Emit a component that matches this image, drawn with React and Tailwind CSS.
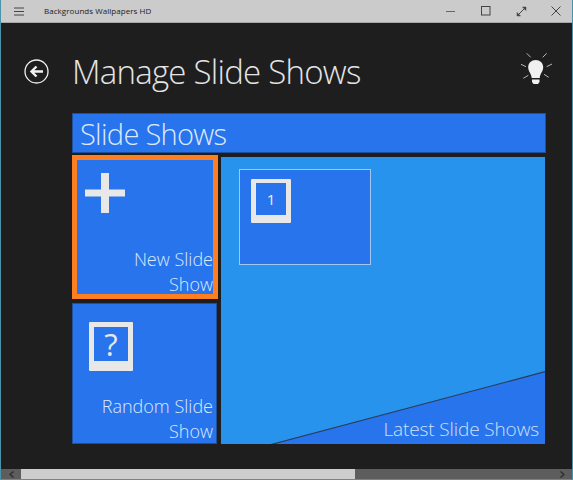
import React from "react";

export default function App() {
  return (
    <div className="w-[573px] h-[480px] flex flex-col overflow-hidden bg-[#1e1e1e] border-l border-r border-[#4b93a8] font-['Open_Sans','Noto_Sans',sans-serif]">
      <div className="h-[23px] shrink-0 bg-[#cbcbcb] border-b border-[#a8a8a8] flex items-center">
        <svg className="ml-[13px] w-[10px] h-[9px]" viewBox="0 0 10 9" stroke="#444" strokeWidth="1" fill="none"><path d="M0 1h10M0 4.500h10M0 8h10" /></svg>
        <span className="ml-[20px] text-[8px] leading-none tracking-[0.05px] text-[#222]">Backgrounds Wallpapers HD</span>
        <div className="ml-auto flex items-center">
          <svg className="w-[10px] h-[10px] mr-[25px]" viewBox="0 0 10 10" stroke="#666" fill="none"><path d="M0 5.500h9" /></svg>
          <svg className="w-[10px] h-[10px] mr-[25px]" viewBox="0 0 10 10" stroke="#444" fill="none"><rect x=".5" y=".5" width="8.500" height="8.500" /></svg>
          <svg className="w-[11px] h-[11px] mr-[24px]" viewBox="0 0 11 11" stroke="#444" fill="#444"><path d="M1.500 9.500l8-8" /><path d="M6.500 1h3.500v3.500zM1 6.500v3.500h3.500z" strokeWidth=".5" /></svg>
          <svg className="w-[10px] h-[10px] mr-[11px]" viewBox="0 0 10 10" stroke="#444" fill="none"><path d="M.5 .5l9 9M9.500 .5l-9 9" /></svg>
        </div>
      </div>

      <div className="flex-1 min-h-0 flex flex-col pl-[71px]">
        <div className="relative h-[90px] shrink-0">
          <svg className="absolute left-[-48px] top-[36px] w-[25px] h-[25px]" viewBox="0 0 25 25" fill="none" stroke="#f2f2f2">
            <circle cx="12.500" cy="12.500" r="11.500" strokeWidth="1.300" />
            <path d="M19 12.500H8M12.500 7.500l-5 5 5 5" strokeWidth="2.400" />
          </svg>
          <h1 className="absolute left-0 top-[26px] text-[33px] leading-[45px] tracking-[-0.75px] font-light text-[#e4e4e4] whitespace-nowrap">Manage Slide Shows</h1>
          <svg className="absolute left-[448px] top-[30px] w-[33px] h-[33px]" viewBox="0 0 33 33" fill="none">
            <path d="M6.700 .3l4 4M26.700 .3l-4 4M1 11.300l5 2.400M32 11l-5.300 2.700M3.300 25.300l5-3M28.700 24.300l-4.700-3" stroke="#b8b8b8" strokeWidth="1" />
            <path d="M15.700 7c4.200 0 7.500 3 7.500 7.200 0 3.800-2.500 5.500-3.400 9.800v1h-8.200v-1c-.9-4.300-3.400-6-3.400-9.800 0-4.200 3.300-7.200 7.500-7.200z" fill="#f0f0f0" />
            <path d="M12 26.500h7.500v2.500l-1.500 2h-4.500l-1.500-2z" fill="#f0f0f0" />
          </svg>
        </div>

        <div className="h-[40px] w-[474px] shrink-0 bg-[#2874ec] border border-[#20509c] flex items-center pl-[7px] pt-[1px]">
          <span className="text-[29px] leading-none tracking-[-0.7px] font-light text-[#dce9fb]">Slide Shows</span>
        </div>

        <div className="flex mt-[2px]">
          <div className="flex flex-col w-[146px] shrink-0">
            <div className="relative h-[144px] border-[5px] border-[#fe7f22] bg-[#2874ec]">
              <svg className="absolute left-[8px] top-[13px] w-[40px] h-[40px]" viewBox="0 0 40 40" fill="#e8e8e8">
                <path d="M16 0h8v16.500h16v7H24v16.500h-8V23.500H0v-7h16z" />
              </svg>
              <div className="absolute right-0 bottom-[-3px] w-[110px] text-right text-[18px] leading-[25px] font-light text-[#dce9fb]">New Slide Show</div>
            </div>
            <div className="relative mt-[4px] w-[145px] h-[141px] bg-[#2874ec] border border-[#20509c]">
              <div className="absolute left-[16px] top-[18px]">
                <div className="w-[44px] h-[49px] bg-[#e8e8e8] rounded-[1px] pt-[5px] px-[5px]">
                  <div className="w-[34px] h-[34px] bg-[#2874ec] flex items-center justify-center text-[31px] leading-none font-medium text-[#e8e8e8]">?</div>
                </div>
              </div>
              <div className="absolute right-[3px] bottom-[-1px] w-[125px] text-right text-[18px] leading-[25px] font-light text-[#dce9fb]">Random Slide Show</div>
            </div>
          </div>

          <div className="relative ml-[3px] mt-[2px] w-[324px] h-[287px] bg-[#2893ec] overflow-hidden">
            <div className="absolute left-[18px] top-[12px] w-[132px] h-[96px] bg-[#2874ec] border border-[#a3c7f5] pl-[11px] pt-[9px]">
              <div className="w-[40px] h-[44px] bg-[#e8e8e8] rounded-[1px] pt-[4px] px-[5px]">
                <div className="w-[30px] h-[32px] bg-[#2874ec] flex items-center justify-center text-[15px] leading-none text-[#f0f0f0]">1</div>
              </div>
            </div>
            <svg className="absolute left-0 top-0 w-[324px] h-[287px]" viewBox="0 0 324 287">
              <path d="M50 287.500 L324 214.700 V287.500 Z" fill="#2874ec" />
              <path d="M50 287.500 L324 214.700" stroke="#2b3b55" strokeWidth="1.200" fill="none" />
            </svg>
            <div className="absolute right-[6px] bottom-[2px] text-[19px] leading-[26px] tracking-[-0.12px] font-light text-[#cfe0fa] whitespace-nowrap">Latest Slide Shows</div>
          </div>
        </div>
      </div>

      <div className="h-[11px] shrink-0 bg-[#5d5d5d] border-b border-[#4b93a8] flex items-stretch">
        <div className="w-[20px] flex items-center justify-center">
          <svg className="w-[5px] h-[7px]" viewBox="0 0 5 7" fill="none" stroke="#2e2e2e" strokeWidth="1.400"><path d="M4.500 .5L1 3.500l3.500 3" /></svg>
        </div>
        <div className="w-[334px] bg-[#cdcdcd]" />
        <div className="ml-auto w-[20px] flex items-center justify-center">
          <svg className="w-[5px] h-[7px]" viewBox="0 0 5 7" fill="none" stroke="#2e2e2e" strokeWidth="1.400"><path d="M.5 .5L4 3.500l-3.500 3" /></svg>
        </div>
      </div>
    </div>
  );
}
